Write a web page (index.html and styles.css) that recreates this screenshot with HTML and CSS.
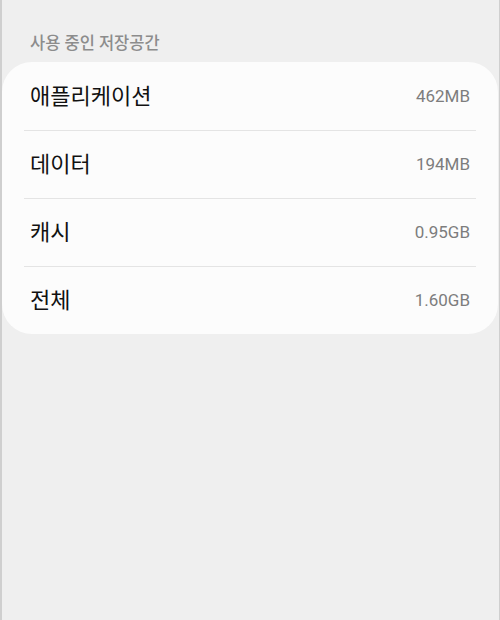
FILE: index.html
```html
<!DOCTYPE html>
<html lang="ko">
<head>
    <meta charset="UTF-8">
    <meta name="viewport" content="width=device-width, initial-scale=1.0">
    <title>사용 중인 저장공간</title>
    <link rel="stylesheet" href="styles.css">
</head>
<body>
    <div class="screen">
        <h2 class="section-title">사용 중인 저장공간</h2>
        <div class="card">
            <div class="row">
                <span class="label">애플리케이션</span>
                <span class="value">462MB</span>
            </div>
            <div class="row">
                <span class="label">데이터</span>
                <span class="value">194MB</span>
            </div>
            <div class="row">
                <span class="label">캐시</span>
                <span class="value">0.95GB</span>
            </div>
            <div class="row">
                <span class="label">전체</span>
                <span class="value">1.60GB</span>
            </div>
        </div>
    </div>
</body>
</html>
```

FILE: styles.css
```css
html, body {
    margin: 0;
    padding: 0;
    height: 100%;
}
body {
    font-family: Roboto, "Noto Sans CJK KR", sans-serif;
    background-color: #efefef;
}
.screen {
    height: 620px;
    box-sizing: border-box;
    border-left: 2px solid #cfcfcf;
    border-right: 1px solid #cfcfcf;
    background-color: #efefef;
}
.section-title {
    margin: 0;
    padding: 34px 0 0 28px;
    height: 28px;
    font-size: 16.5px;
    font-weight: 500;
    line-height: 20px;
    color: #8c8c8c;
}
.card {
    background-color: #fcfcfc;
    border-radius: 30px;
    margin: 0 1px 0 0;
}
.row {
    display: flex;
    justify-content: space-between;
    align-items: center;
    height: 68px;
    padding: 0 28px 0 28px;
    position: relative;
}
.row + .row::before {
    content: "";
    position: absolute;
    top: 0;
    left: 22px;
    right: 22px;
    height: 1px;
    background-color: #e4e4e4;
}
.label {
    font-size: 22px;
    color: #111;
    margin-bottom: 4px;
}
.value {
    font-size: 17px;
    color: #7d7d7d;
}
```
